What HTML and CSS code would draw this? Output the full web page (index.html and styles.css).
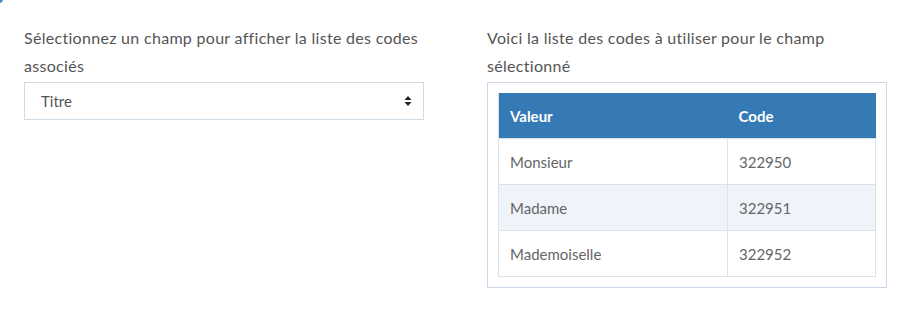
FILE: index.html
```html
<!DOCTYPE html>
<html lang="fr">
<head>
    <meta charset="UTF-8">
    <title>Liste des codes</title>
    <link rel="stylesheet" href="styles.css">
</head>
<body>
    <div class="corner"></div>
    <div class="panel">
        <div class="col">
            <label class="label" for="champ">Sélectionnez un champ pour afficher la liste des codes associés</label>
            <div class="select">
                <span>Titre</span>
                <svg class="arrows" width="8" height="12" viewBox="0 0 8 12">
                    <path d="M4 1 L7.5 5 H0.5 Z M4 11 L7.5 7 H0.5 Z" fill="#222"/>
                </svg>
            </div>
        </div>
        <div class="col">
            <p class="label">Voici la liste des codes à utiliser pour le champ sélectionné</p>
            <div class="box">
                <table class="codes">
                    <tr><th>Valeur</th><th>Code</th></tr>
                    <tr><td>Monsieur</td><td>322950</td></tr>
                    <tr class="alt"><td>Madame</td><td>322951</td></tr>
                    <tr><td>Mademoiselle</td><td>322952</td></tr>
                </table>
            </div>
        </div>
    </div>
</body>
</html>
```

FILE: styles.css
```css
body {
    margin: 0;
    background-color: #fff;
    color: #555;
    font-family: 'Lato', sans-serif;
    font-size: 16px;
}
.corner {
    position: absolute;
    top: -6px;
    left: -6px;
    width: 9px;
    height: 9px;
    border-radius: 4px;
    background-color: #3a86d0;
}
.panel {
    display: flex;
    gap: 63px;
    padding: 24px 24px 0 24px;
}
.col {
    width: 400px;
}
.label {
    display: block;
    margin: 0 0 2px 0;
    line-height: 28px;
    letter-spacing: 0.3px;
}
.select {
    display: flex;
    align-items: center;
    justify-content: space-between;
    height: 36px;
    padding: 0 11px 0 16px;
    border: 1px solid #cfdbe7;
    color: #555;
    font-size: 15px;
}
.box {
    border: 1px solid #cbd8e8;
    padding: 10px;
}
.codes {
    width: 100%;
    border-collapse: collapse;
    border-left: 1px solid #ddd;
    font-size: 15px;
}
.codes th {
    background-color: #3579b5;
    color: #fff;
    font-weight: 700;
    text-align: left;
    height: 45px;
    padding: 0 11px;
}
.codes td {
    height: 45px;
    padding: 0 11px;
    border: 1px solid #dde2e8;
    color: #666;
}
.codes th:first-child,
.codes td:first-child {
    width: 206px;
}
.codes tr.alt td {
    background-color: #eff4fb;
}
```
